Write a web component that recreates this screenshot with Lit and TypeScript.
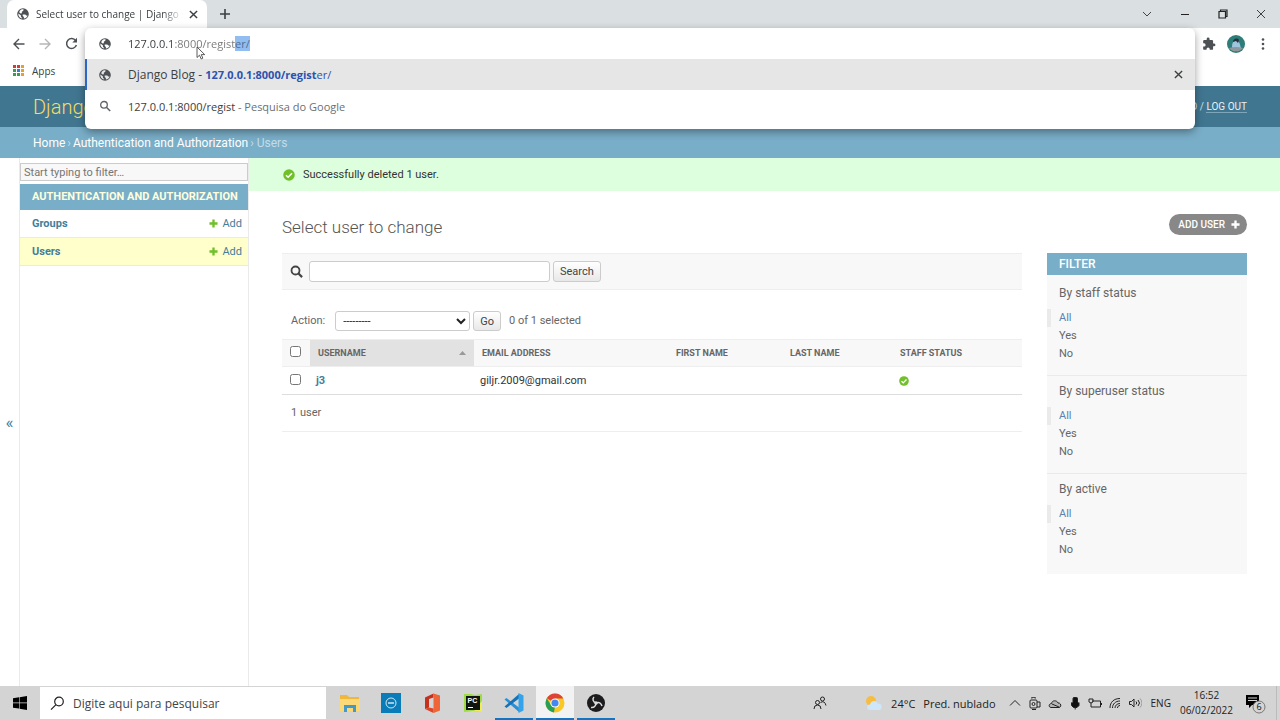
import { LitElement, html, css, svg } from "lit";
import { customElement, query } from "lit/decorators.js";
import { classMap } from "lit/directives/class-map.js";

const globe = html`<svg class="globe" viewBox="0 0 24 24" width="14" height="14" aria-hidden="true">
  <path fill="#4d5156" d="M12 2a10 10 0 1 0 0 20 10 10 0 0 0 0-20zm8 11.500c-.6 3.500-3.300 6-6.500 6.400v-2.600l-2-2v-2.300h4.500l1.500 1.500h2.300zM4.200 11l4.300 3.500v2.500l2 1.500v1.300C6.700 19.200 4 16 4 12.300zm4.300-6.100C10 4 11.500 3.900 13 4.100L12.500 6.500 10 8v2.500l-2 .8-2.600-2.200c.6-1.800 1.600-3.200 3.100-4.200z"/>
</svg>`;

const checkIcon = (size: number) => html`<svg viewBox="0 0 24 24" width=${size} height=${size} aria-hidden="true">
  <circle cx="12" cy="12" r="11.500" fill="#70bf2b"/>
  <path d="M6 12.500l4.200 4L18 8.500" fill="none" stroke="#fff" stroke-width="3.200"/>
</svg>`;

const plusIcon = (size: number, color: string) => html`<svg viewBox="0 0 10 10" width=${size} height=${size} aria-hidden="true">
  <path d="M5 .5v9M.5 5h9" stroke=${color} stroke-width="2.600"/>
</svg>`;

const crossIcon = (size: number, width: number) => html`<svg viewBox="0 0 10 10" width=${size} height=${size} aria-hidden="true">
  <path d="M1 1l8 8M9 1l-8 8" stroke="#3c4043" stroke-width=${width} fill="none"/>
</svg>`;

@customElement("browser-chrome")
class BrowserChrome extends LitElement {
  @query(".address") address!: HTMLInputElement;

  static styles = css`
    :host { display: block; position: relative; z-index: 2; font-family: "Open Sans", "Noto Sans", sans-serif; font-size: 10px; color: #3c4043; }
    button { font: inherit; border: 0; padding: 0; background: none; color: inherit; display: flex; align-items: center; justify-content: center; }
    svg { display: block; flex: none; }
    .tabs { height: 28px; background: #dadfe2; display: flex; align-items: center; }
    .tab { width: 200px; height: 28px; margin-left: 7px; padding: 0 9px; box-sizing: border-box; display: flex; align-items: center; gap: 6px; background: #fff; border-radius: 7px 7px 0 0; }
    .title { flex: 1; overflow: hidden; white-space: nowrap; mask-image: linear-gradient(90deg, #000 86%, transparent); }
    .new { margin-left: 12px; }
    .window { margin-left: auto; display: flex; }
    .window button { width: 38px; height: 28px; }
    .bar { height: 31px; background: #fff; display: flex; align-items: center; padding: 0 4px 0 8px; }
    .bar button { width: 22px; height: 24px; margin-right: 4px; }
    .bar .right { margin-left: auto; display: flex; align-items: center; }
    .bar .right button { margin: 0; width: 27px; }
    .bookmarks { height: 27px; background: #fff; display: flex; align-items: flex-start; padding: 0 12px; }
    .apps { display: flex; align-items: center; gap: 7px; height: 23px; color: inherit; text-decoration: none; }
    .omnibox { position: absolute; left: 85px; right: 85px; top: 28px; background: #fff; border-radius: 6px; box-shadow: 0 3px 8px rgba(0, 0, 0, .38); padding-bottom: 7px; font-size: 11px; }
    .line { display: flex; align-items: center; height: 32px; padding: 0 12px 0 13px; gap: 16px; box-sizing: border-box; white-space: nowrap; }
    .line.entry { height: 31px; }
    .line.active { height: 31px; background: #e6e6e6; border-left: 2px solid #2b67c9; padding-left: 11px; }
    .address { flex: 1; font: inherit; border: 0; outline: 0; padding: 0; color: transparent; background: linear-gradient(90deg, #34373b 47px, #777 47px); background-clip: text; -webkit-background-clip: text; caret-color: transparent; }
    .address::selection { background: #92bdf0; color: #4f6f96; }
    .suggestion { flex: 1; }
    .name { font-size: 12px; }
    .url { color: #2b53b0; }
    .muted { color: #6b6f73; }
    .cursor { position: absolute; left: 196px; top: 46px; }
  `;

  firstUpdated() {
    this.address.focus();
    this.address.setSelectionRange(21, 24);
  }

  render() {
    const dots = ["#d93a2b", "#d93a2b", "#e5a02e", "#3f9b4f", "#3a78d8", "#e5a02e", "#3f9b4f", "#3f9b4f", "#e5a02e"];
    return html`
      <div class="tabs">
        <div class="tab">${globe}<span class="title">Select user to change | Django site admin</span>
          <button aria-label="Close tab">${crossIcon(9, 1.6)}</button></div>
        <button class="new" aria-label="New tab">
          <svg width="12" height="12" viewBox="0 0 12 12"><path d="M6 1v10M1 6h10" stroke="#3c4043" stroke-width="1.600"/></svg></button>
        <div class="window">
          <button aria-label="Search tabs"><svg width="10" height="10" viewBox="0 0 10 10"><path d="M1 3l4 4 4-4" fill="none" stroke="#444"/></svg></button>
          <button aria-label="Minimize"><svg width="10" height="10" viewBox="0 0 10 10"><path d="M1 5.500h8" stroke="#222"/></svg></button>
          <button aria-label="Restore"><svg width="10" height="10" viewBox="0 0 10 10"><path d="M1 2.500h6.500V9H1zM2.500 2.500v-1.500H9v6.500H7.500" fill="none" stroke="#222" stroke-width="1.200"/></svg></button>
          <button aria-label="Close">${crossIcon(10, 1)}</button>
        </div>
      </div>
      <div class="bar">
        <button aria-label="Back"><svg width="12" height="12" viewBox="0 0 12 12"><path d="M11.500 6H1.200M6 1L1 6l5 5" fill="none" stroke="#4d5156" stroke-width="1.400"/></svg></button>
        <button aria-label="Forward"><svg width="12" height="12" viewBox="0 0 12 12"><path d="M.5 6h10.300M6 1l5 5-5 5" fill="none" stroke="#b4b6b8" stroke-width="1.400"/></svg></button>
        <button aria-label="Reload"><svg width="13" height="13" viewBox="0 0 13 13"><path d="M10.700 3.600A5 5 0 1 0 11.400 8" fill="none" stroke="#4d5156" stroke-width="1.500"/><path d="M12 .8v4.700H7.300z" fill="#4d5156"/></svg></button>
        <div class="right">
          <button aria-label="Extensions"><svg width="14" height="14" viewBox="0 0 24 24"><path fill="#4d5156" d="M20.500 11H19V7a2 2 0 0 0-2-2h-4V3.500a2.500 2.500 0 0 0-5 0V5H4a2 2 0 0 0-2 2v3.800h1.500a2.700 2.700 0 0 1 0 5.400H2V20a2 2 0 0 0 2 2h3.800v-1.500a2.700 2.700 0 0 1 5.400 0V22H17a2 2 0 0 0 2-2v-4h1.500a2.500 2.500 0 0 0 0-5z"/></svg></button>
          <button aria-label="Profile"><svg width="18" height="18" viewBox="0 0 18 18"><circle cx="9" cy="9" r="9" fill="#2d7d7a"/><path d="M5 12c0-5 2-7 5-6s3 4 4 7l-3 3H6z" fill="#9fc4dd"/><path d="M6 7c0-3 4-5 6-2l-1 3-2-2z" fill="#26323a"/><path d="M2 13q7-2 14 0a9 9 0 0 1-14 0z" fill="#8d979c"/></svg></button>
          <button aria-label="Menu"><svg width="4" height="14" viewBox="0 0 4 14"><circle cx="2" cy="2.500" r="1.300" fill="#4d5156"/><circle cx="2" cy="7" r="1.300" fill="#4d5156"/><circle cx="2" cy="11.500" r="1.300" fill="#4d5156"/></svg></button>
        </div>
      </div>
      <div class="bookmarks"><a class="apps" href="#apps">
        <svg width="13" height="13" viewBox="0 0 13 13">${dots.map((c, i) => svg`<rect x=${1 + (i % 3) * 4} y=${1 + Math.floor(i / 3) * 4} width="3" height="3" fill=${c}/>`)}</svg>
        <span>Apps</span></a></div>
      <div class="omnibox">
        <div class="line entry">${globe}<input class="address" aria-label="Address" value="127.0.0.1:8000/register/"></div>
        <div class="line active">${globe}<span class="suggestion"><span class="name">Django Blog - </span><span class="url"><b>127.0.0.1:8000/regist</b>er/</span></span>
          <button aria-label="Remove suggestion">${crossIcon(9, 1.5)}</button></div>
        <div class="line"><svg width="14" height="14" viewBox="0 0 14 14"><circle cx="6" cy="5.800" r="3.300" fill="none" stroke="#5f6368" stroke-width="1.300"/><path d="M8.400 8.200l3.800 3.800" stroke="#5f6368" stroke-width="1.500"/></svg>
          <span class="suggestion">127.0.0.1:8000/regist <span class="muted">- Pesquisa do Google</span></span></div>
      </div>
      <svg class="cursor" width="10" height="14" viewBox="0 0 10 14"><path d="M1 1v10.500l2.500-2.300L5.200 13l1.600-.8L5.300 8.600h3.400z" fill="#fff" stroke="#333" stroke-width=".8"/></svg>
    `;
  }
}

@customElement("admin-page")
class AdminPage extends LitElement {
  static styles = css`
    :host { display: flex; flex-direction: column; flex: 1; font-family: Roboto, sans-serif; font-size: 11px; line-height: 16px; color: #333; background: #fff; }
    a { color: #447e9b; text-decoration: none; }
    svg { display: block; flex: none; }
    h1, h2, h3, ul, p { margin: 0; padding: 0; font-weight: 400; list-style: none; }
    .header { height: 41px; padding: 0 33px; background: #417690; display: flex; align-items: center; justify-content: space-between; color: #cfe3ec; font-size: 10px; line-height: 12px; }
    .header h1 { font-size: 20px; font-weight: 300; color: #f5dd5d; line-height: 24px; }
    .header a { color: #e8f2f6; border-bottom: 1px solid #7fa6b8; }
    .crumbs { height: 31px; padding: 0 33px; background: #79aec8; color: #c4dce8; display: flex; align-items: center; gap: 2px; font-size: 12px; white-space: nowrap; }
    .crumbs a { color: #fff; }
    .main { flex: 1; display: flex; }
    .toggle { width: 19px; border: 0; padding: 0; background: #fff; color: #447e9b; font: 17px Roboto, sans-serif; }
    .side { width: 230px; box-sizing: border-box; padding-top: 5px; border: solid #eaeaea; border-width: 0 1px; }
    .side input { display: block; width: 100%; height: 18px; box-sizing: border-box; border: 1px solid #ccc; background: #f8f8f8; padding: 0 3px; font: 11px Roboto, sans-serif; margin-bottom: 3px; }
    .side input::placeholder { color: #757575; }
    .side h2 { background: #79aec8; color: #ffffdd; font-weight: 700; font-size: 11px; height: 26px; display: flex; align-items: center; padding: 0 12px; white-space: nowrap; }
    .model { height: 28px; box-sizing: border-box; border-bottom: 1px solid #eaeaea; display: flex; align-items: center; justify-content: space-between; padding: 0 6px 0 12px; }
    .model.current { background: #ffffcc; }
    .model .name { font-weight: 700; }
    .model .add { display: flex; align-items: center; gap: 4px; }
    .body { flex: 1; min-width: 0; }
    .message { height: 33px; background: #ddffdd; display: flex; align-items: center; gap: 8px; padding: 0 34px; }
    .content { padding: 22px 33px 0; }
    .heading { height: 40px; display: flex; justify-content: space-between; align-items: flex-start; }
    .heading h1 { font-size: 17px; font-weight: 300; line-height: 28px; color: #555; }
    .adduser { display: flex; align-items: center; gap: 6px; height: 21px; margin-top: 1px; padding: 0 7px 0 9px; border-radius: 11px; background: #888; color: #fff; font-size: 10px; font-weight: 500; }
    .columns { display: flex; align-items: flex-start; gap: 25px; }
    .results { flex: 1; min-width: 0; color: #666; }
    .search { height: 37px; box-sizing: border-box; background: #f8f8f8; border: solid #eee; border-width: 1px 0; display: flex; align-items: center; padding: 0 8px; }
    .search label { margin-right: 6px; }
    .search input { width: 241px; height: 21px; box-sizing: border-box; border: 1px solid #ccc; border-radius: 3px; margin-right: 3px; }
    .btn { height: 21px; box-sizing: border-box; padding: 0 6px; border: 1px solid #ccc; border-radius: 3px; background: linear-gradient(#fff, #e8e8e8); color: #444; font: 11px Roboto, sans-serif; }
    .actions { height: 49px; padding: 21px 9px 0; box-sizing: border-box; display: flex; align-items: flex-start; line-height: 20px; }
    .actions select { width: 135px; height: 20px; margin: 0 3px 0 10px; border: 1px solid #ccc; border-radius: 3px; background: #fff; padding: 0 3px; font: 11px Roboto, sans-serif; color: #222; }
    .actions .btn { height: 20px; margin-right: 8px; }
    table { width: 100%; border-collapse: collapse; table-layout: fixed; }
    th, td { text-align: left; padding: 0 6px; height: 27px; box-sizing: border-box; border-bottom: 1px solid #eee; }
    thead th { padding: 0 8px; background: #f8f8f8; border-top: 1px solid #eee; font-size: 9px; font-weight: 700; color: #666; }
    thead th.sorted { background: #e2e2e2; }
    .c-pick { width: 28px; }
    .c-user { width: 164px; }
    .c-mail { width: 194px; }
    .c-first { width: 114px; }
    .c-last { width: 110px; }
    .sortable { display: flex; justify-content: space-between; align-items: center; }
    tbody td, tbody th { color: #333; border-bottom: 1px solid #ddd; height: 28px; }
    tbody th { font-weight: 700; }
    th.pick, td.pick { padding: 0 8px 3px; }
    .pick input { display: block; margin: 0; width: 11px; height: 11px; }
    .staff { padding-left: 7px; }
    .count { height: 37px; box-sizing: border-box; border-bottom: 1px solid #eee; display: flex; align-items: center; padding: 0 9px; }
    .filter { width: 200px; background: #f8f8f8; padding-bottom: 3px; }
    .filter h2 { height: 22px; margin-bottom: 3px; padding: 0 12px; background: #79aec8; color: #fff; font-size: 12px; font-weight: 500; line-height: 22px; }
    .group { padding: 7px 0 12px; border-bottom: 1px solid #eaeaea; }
    .group:last-child { border-bottom: 0; }
    .group h3 { font-size: 12px; color: #666; padding: 0 12px; margin-bottom: 8px; }
    .group li { line-height: 18px; padding-left: 12px; }
    .group li a { color: #666; }
    .group li.selected { border-left: 4px solid #eaeaea; padding-left: 8px; }
    .group li.selected a { color: #5b80b2; }
  `;

  render() {
    return html`
      <header class="header"><h1>Django administration</h1><span>PASSWORD / <a href="#logout">LOG OUT</a></span></header>
      <nav class="crumbs" aria-label="Breadcrumbs"><a href="#home">Home</a><span>›</span><a href="#auth">Authentication and Authorization</a><span>› Users</span></nav>
      <div class="main">
        <button class="toggle" aria-label="Toggle navigation">«</button>
        <nav class="side" aria-label="Models">
          <input aria-label="Filter navigation items" placeholder="Start typing to filter…">
          <h2>AUTHENTICATION AND AUTHORIZATION</h2>
          ${["Groups", "Users"].map((name) => html`
            <div class=${classMap({ model: true, current: name === "Users" })}>
              <a class="name" href="#model">${name}</a>
              <a class="add" href="#add">${plusIcon(9, "#70bf2b")}Add</a>
            </div>`)}
        </nav>
        <main class="body">
          <p class="message">${checkIcon(12)}Successfully deleted 1 user.</p>
          <div class="content">
            <div class="heading"><h1>Select user to change</h1><a class="adduser" href="#adduser">ADD USER ${plusIcon(9, "#fff")}</a></div>
            <div class="columns">
              <div class="results">
                <form class="search">
                  <label for="q" aria-label="Search"><svg width="13" height="13" viewBox="0 0 13 13"><circle cx="5.500" cy="5.500" r="4" fill="none" stroke="#444" stroke-width="1.800"/><path d="M8.500 8.500l3.600 3.600" stroke="#444" stroke-width="2.200"/></svg></label>
                  <input id="q" type="text"><button type="button" class="btn">Search</button>
                </form>
                <div class="actions"><label for="action">Action:</label>
                  <select id="action"><option>---------</option></select>
                  <button class="btn">Go</button><span>0 of 1 selected</span></div>
                <table>
                  <colgroup><col class="c-pick"><col class="c-user"><col class="c-mail"><col class="c-first"><col class="c-last"><col></colgroup>
                  <thead><tr>
                    <th class="pick"><input type="checkbox" aria-label="Select all"></th>
                    <th class="sorted"><span class="sortable">USERNAME<svg width="7" height="4" viewBox="0 0 7 4"><path d="M0 4l3.500-4L7 4z" fill="#999"/></svg></span></th>
                    <th>EMAIL ADDRESS</th><th>FIRST NAME</th><th>LAST NAME</th><th>STAFF STATUS</th>
                  </tr></thead>
                  <tbody><tr>
                    <td class="pick"><input type="checkbox" aria-label="Select j3"></td>
                    <th><a href="#j3">j3</a></th><td>giljr.2009@gmail.com</td><td></td><td></td><td class="staff">${checkIcon(10)}</td>
                  </tr></tbody>
                </table>
                <p class="count">1 user</p>
              </div>
              <aside class="filter"><h2>FILTER</h2>
                ${["By staff status", "By superuser status", "By active"].map((label) => html`
                  <section class="group"><h3>${label}</h3><ul>
                    <li class="selected"><a href="#all">All</a></li><li><a href="#yes">Yes</a></li><li><a href="#no">No</a></li>
                  </ul></section>`)}
              </aside>
            </div>
          </div>
        </main>
      </div>`;
  }
}

@customElement("task-bar")
class TaskBar extends LitElement {
  static styles = css`
    :host { display: flex; align-items: stretch; height: 34px; background: #d4d4d4; font-family: "Open Sans", "Noto Sans", sans-serif; font-size: 12px; color: #222; white-space: nowrap; }
    button { font: inherit; color: inherit; border: 0; padding: 0; background: none; display: flex; align-items: center; justify-content: center; }
    svg { display: block; flex: none; }
    .start { width: 40px; }
    .search { width: 286px; box-sizing: border-box; margin: 1px 0; padding: 0 10px; background: #fff; display: flex; align-items: center; gap: 8px; }
    .search input { flex: 1; min-width: 0; border: 0; outline: 0; padding: 0; font: inherit; background: none; }
    .search input::placeholder { color: #444; opacity: 1; }
    .pins { display: flex; padding-left: 5px; gap: 3px; }
    .pin { width: 38px; box-sizing: border-box; border: solid transparent; border-width: 2px 0; }
    .pin.open { border-bottom-color: #1275c4; }
    .pin.front { background: #f2f2f2; border-top-color: #f2f2f2; }
    .tray { margin-left: auto; display: flex; align-items: center; gap: 6px; }
    .tray > button { height: 100%; }
    .people { margin-right: 32px; }
    .weather { gap: 8px; margin-right: 6px; font-size: 11px; }
    .weather span { display: flex; gap: 8px; }
    .lang { font-size: 10px; margin: 0 3px; }
    .clock { font-size: 10px; line-height: 15px; text-align: center; }
    .notes { width: 38px; padding-right: 6px; border-right: 1px solid #bbb; margin-right: 3px; }
  `;

  pins = [
    { name: "File Explorer", state: "", art: svg`<path d="M1 3h7l2 2h10v14H1z" fill="#f0b73b"/><path d="M1 7h20v12H1z" fill="#fbd978"/><path d="M5 20v-7h12v7h-3v-4H8v4z" fill="#4399c9"/>` },
    { name: "Dell", state: "", art: svg`<path d="M1 1h20v20H1z" fill="#0a7db8"/><circle cx="11" cy="11" r="5" fill="none" stroke="#fff" stroke-width=".8"/><path d="M8 11h6" stroke="#fff" stroke-width="1.200"/>` },
    { name: "Office", state: "", art: svg`<path d="M4 5.500L12.500 1.500v4L8 7v8.500L4 17z" fill="#c5311c"/><path d="M12.500 1.500L19 3.500v15L12.500 21z" fill="#ef6537"/><path d="M4 17l4-1.500 4.500 1V21z" fill="#de4526"/>` },
    { name: "PyCharm", state: "", art: svg`<path d="M2 2h7l4 1 7-1v18l-9-1-9 1z" fill="#9fdc43"/><path d="M20 9v11l-8-1z" fill="#f2ee52"/><path d="M4 4h14v14H4z" fill="#101410"/><text x="5.500" y="11" font-size="7" font-weight="700" font-family="Liberation Sans, sans-serif" fill="#fff">PC</text><path d="M6 15.500h5" stroke="#fff"/>` },
    { name: "Visual Studio Code", state: "open", art: svg`<path d="M1.500 7.500l2-1.500L16 15.500V20z" fill="#2a8fd6"/><path d="M1.500 14.500l2 1.500L16 6.500V2z" fill="#1672b8"/><path d="M15.500 1l5 2.500v15l-5 2.500z" fill="#34a3ea"/>` },
    { name: "Chrome", state: "open front", art: svg`<circle cx="11" cy="11" r="9.500" fill="#f9c823"/><path d="M11 11L2.800 6.300A9.500 9.500 0 0 1 19.300 6.500H11z" fill="#dd4437"/><path d="M2.800 6.300l4.300 7L11 14l-1 6.500A9.500 9.500 0 0 1 2.800 6.300z" fill="#27a055"/><circle cx="11" cy="11" r="4.600" fill="#fff"/><circle cx="11" cy="11" r="3.600" fill="#4487ed"/>` },
    { name: "OBS Studio", state: "open", art: svg`<circle cx="11" cy="11" r="9" fill="#1c1c1e"/><path d="M11 11c-3-1-4-4-2-6M11 11c3-1.500 5 0 6 3M11 11c0 3-2 5-5 4.500" fill="none" stroke="#ddd" stroke-width="1.500"/><circle cx="11" cy="11" r="1.800" fill="#ddd"/>` },
  ];

  tray = [
    svg`<path d="M2 9.500L7 4.500l5 5" />`,
    svg`<rect x="2" y="4" width="7" height="8" rx="1"/><circle cx="5.500" cy="8" r="1.500"/><path d="M9 6h3v5H9M3 2q2.500-1 5 0M4 13.500h4"/>`,
    svg`<path d="M3 11.500C0 11 1 7.500 3.500 7.500 4 4 9 4 10 7c3-.5 4 4 1 4.500zM4 8l7 3" fill="#b5b5b5"/>`,
    svg`<rect x="5" y="1.500" width="4.500" height="8" rx="1" fill="#111"/><path d="M3.500 6.500v3l2 2H9l2-2v-3M7.200 11v2.500" fill="#111"/>`,
    svg`<path d="M4 5h8.500v6H5M1 3h4v3l-2 1-2-1zM3 7v4h2M13.500 7v2"/>`,
    svg`<path d="M2 12C2 6 6 2.500 12 2.500M4.500 12c0-4 3-7 7.500-7M7 12c0-2.500 2-4.500 5-4.500M9.500 12c0-1.500 1-2.500 2.500-2.500"/>`,
    svg`<path d="M1.500 5.500h2L6 3v8L3.500 8.500h-2zM8 5.500q1.500 1.500 0 3M10 4q3 3 0 6"/><path d="M12 2.500q4 4.500 0 9" stroke="#999"/>`,
  ];

  render() {
    return html`
      <button class="start" aria-label="Start"><svg width="14" height="14" viewBox="0 0 14 14"><path d="M0 2.200l6-.9v5.300H0zM6.600 1.200L14 0v6.600H6.600zM0 7.300h6v5.300l-6-.9zM6.600 7.300H14V14l-7.400-1.200z" fill="#000"/></svg></button>
      <label class="search"><svg width="15" height="15" viewBox="0 0 15 15"><circle cx="9" cy="5.500" r="4.300" fill="none" stroke="#222" stroke-width="1.200"/><path d="M6 8.700L1 13.700" stroke="#222" stroke-width="1.200"/></svg>
        <input type="text" aria-label="Search" placeholder="Digite aqui para pesquisar"></label>
      <div class="pins">${this.pins.map((p) => html`<button class="pin ${p.state}" aria-label=${p.name}><svg width="22" height="22" viewBox="0 0 22 22">${p.art}</svg></button>`)}</div>
      <div class="tray">
        <button class="people" aria-label="People"><svg width="14" height="14" viewBox="0 0 14 14" fill="none" stroke="#222"><circle cx="4.500" cy="6.500" r="2"/><path d="M1 13q0-4 3.500-4T8 13"/><circle cx="9.500" cy="3" r="2"/><path d="M7.500 6.500q4-2.500 5.500 3"/></svg></button>
        <button class="weather"><svg width="18" height="16" viewBox="0 0 18 16"><circle cx="6" cy="6" r="5" fill="#f6bd43"/><path d="M5 15C1 15 1 9.500 5 9.500 6 5 12 5 12.500 8.500 18 8 18 15 14 15z" fill="#cfe6f8"/></svg><span><span>24°C</span><span>Pred. nublado</span></span></button>
        ${this.tray.map((art) => html`<svg width="14" height="14" viewBox="0 0 14 14" fill="none" stroke="#222" stroke-width="1">${art}</svg>`)}
        <button class="lang">ENG</button>
        <button class="clock"><span>16:52<br>06/02/2022</span></button>
        <button class="notes" aria-label="Notifications"><svg width="22" height="22" viewBox="0 0 22 22"><path d="M2 3h13v10H8l-3 3v-3H2z" fill="#000"/><path d="M4 6h9M4 8.500h9" stroke="#d4d4d4"/><circle cx="15" cy="15" r="6" fill="#d4d4d4" stroke="#777"/><text x="15" y="18" text-anchor="middle" font-size="9" fill="#111">6</text></svg></button>
      </div>`;
  }
}

@customElement("app-root")
class AppRoot extends LitElement {
  static styles = css`
    :host { display: flex; flex-direction: column; min-height: 100vh; }
  `;

  render() {
    return html`<browser-chrome></browser-chrome><admin-page></admin-page><task-bar></task-bar>`;
  }
}
